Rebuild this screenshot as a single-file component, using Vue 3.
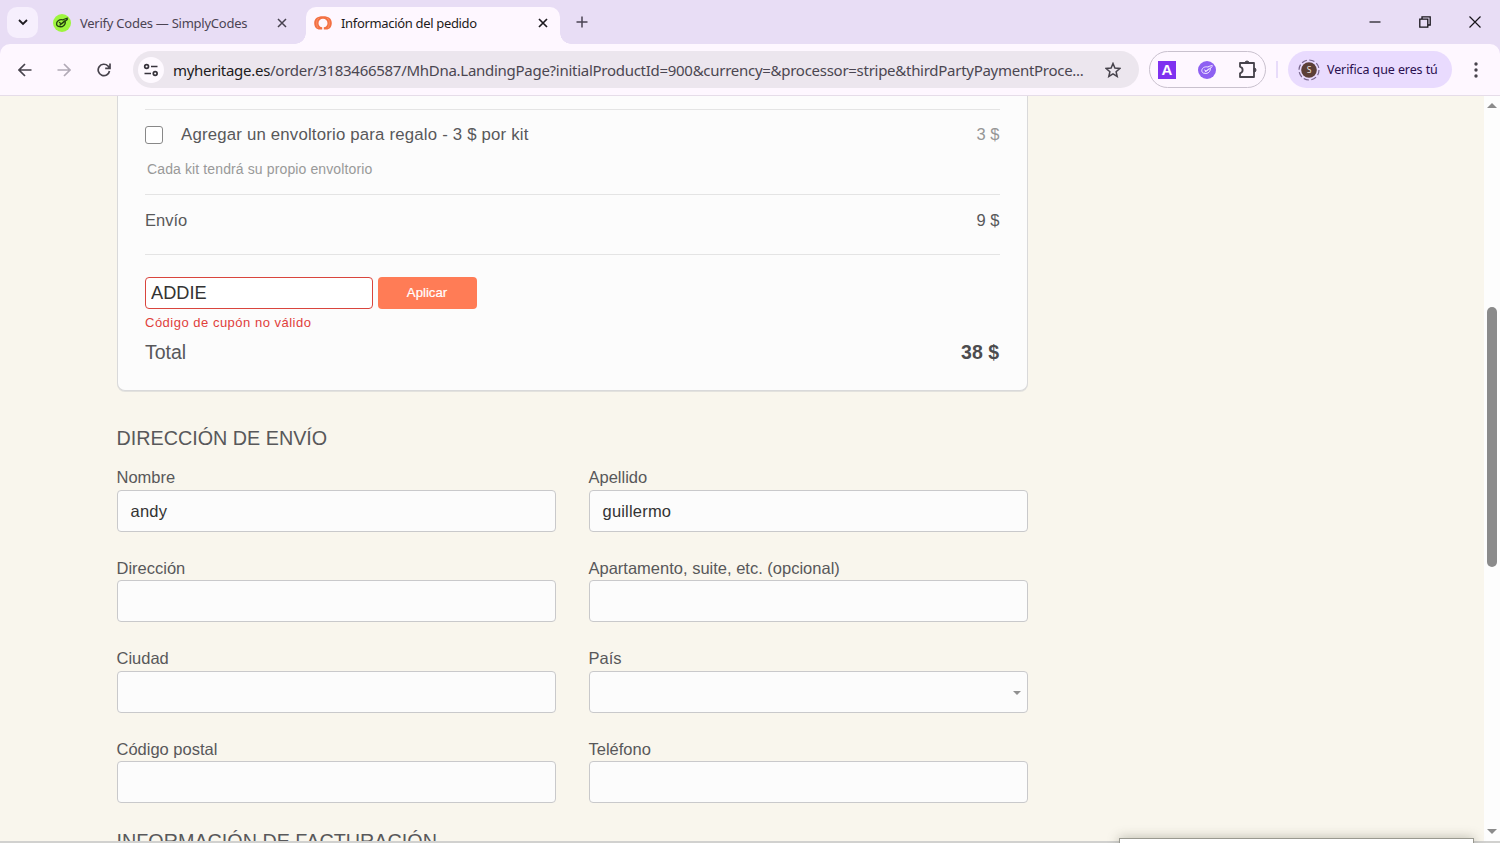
<template>
  <div class="browser">
    <header class="tabs">
      <button class="tab-search" aria-label="tabs">
        <svg width="12" height="12" viewBox="0 0 12 12"><path d="M2 4l4 4 4-4" fill="none" stroke="#1d1b20" stroke-width="1.8" /></svg>
      </button>
      <div class="tab">
        <svg class="favicon" width="18" height="18" viewBox="0 0 18 18">
          <circle cx="9" cy="9" r="9" fill="#9df53e" />
          <g fill="none" stroke="#24420f" stroke-width="1.3" stroke-linecap="round">
            <path d="M10 5.8C6 4.8 3.300 7.600 3.600 10.200c.4 3 5 3.300 7.300 1.200 1.300-1.200 1.600-3 1.100-4.200" />
            <path d="M6.500 8.500l2 1.500L14.300 5.500M7 11l4.500-4M10.500 5.500l4-1.300" />
          </g>
        </svg>
        <span class="tab-title first">Verify Codes — SimplyCodes</span>
        <svg class="close" width="10" height="10" viewBox="0 0 10 10"><path d="M1 1l8 8M9 1L1 9" stroke="#47414f" stroke-width="1.5" /></svg>
      </div>
      <div class="tab active">
        <svg class="favicon" width="18" height="18" viewBox="0 0 18 18">
          <path d="M8.200 15.500H6C2.200 15.500.2 12.800.2 9 .2 5 3 2.300 9 2.300S17.800 5 17.800 9c0 3.800-2 6.500-5.800 6.500H9.800v-2.200c2.200-.3 3.700-1.900 3.700-4.100 0-2.600-2-4.400-4.500-4.400S4.500 6.600 4.500 9.200c0 2.200 1.500 3.800 3.700 4.100z" fill="#f37043" />
          <path d="M4 14C1.700 9.500 2.500 5.500 5 4M14 14c2.300-4.500 1.500-8.500-1-10" fill="none" stroke="#fba27e" stroke-width=".6" />
        </svg>
        <span class="tab-title second">Información del pedido</span>
        <svg class="close" width="10" height="10" viewBox="0 0 10 10"><path d="M1 1l8 8M9 1L1 9" stroke="#1d1b20" stroke-width="1.7" /></svg>
      </div>
      <svg class="new-tab" width="12" height="12" viewBox="0 0 12 12"><path d="M6 .5v11M.5 6h11" stroke="#4a4353" stroke-width="1.5" /></svg>
      <div class="win-controls">
        <svg width="12" height="12" viewBox="0 0 12 12"><path d="M.5 6h11" stroke="#17151a" stroke-width="1.200" /></svg>
        <svg width="12" height="12" viewBox="0 0 12 12"><path d="M.8 3.200h8v8h-8zM3 3V.8h8.200V9H9" fill="none" stroke="#17151a" stroke-width="1.300" /></svg>
        <svg width="12" height="12" viewBox="0 0 12 12"><path d="M.5.5l11 11M11.500.5L.5 11.500" stroke="#17151a" stroke-width="1.200" /></svg>
      </div>
    </header>

    <nav class="toolbar">
      <svg class="nav-icon" width="14" height="14" viewBox="0 0 14 14"><path d="M13.500 7H1.500M7 1L1 7l6 6" fill="none" stroke="#47434c" stroke-width="1.700" /></svg>
      <svg class="nav-icon" width="14" height="14" viewBox="0 0 14 14"><path d="M.5 7h12M7 1l6 6-6 6" fill="none" stroke="#b1aab6" stroke-width="1.700" /></svg>
      <svg class="nav-icon reload" width="14" height="14" viewBox="0 0 14 14"><path d="M12.500 8A5.700 5.700 0 1 1 11 3l1.700 1.900M13 .5v4.800H8.200" fill="none" stroke="#47434c" stroke-width="1.700" /></svg>
      <div class="omnibox">
        <span class="site-info">
          <svg width="16" height="14" viewBox="0 0 16 14" fill="none" stroke="#37333c" stroke-width="1.700">
            <circle cx="3.600" cy="3.500" r="1.900" /><path d="M8 3.500h6.500M1.500 10.500H8" /><circle cx="12.200" cy="10.500" r="1.900" />
          </svg>
        </span>
        <span class="url"><b>myheritage.es</b>/order/3183466587/MhDna.LandingPage?initialProductId=900&amp;currency=&amp;processor=stripe&amp;thirdPartyPaymentProce...</span>
        <svg class="star" width="16" height="16" viewBox="0 0 16 16"><path d="M8 1.500l1.900 4.600 4.900.4-3.700 3.200 1.100 4.800L8 11.900l-4.200 2.600 1.100-4.800L1.200 6.500l4.900-.4z" fill="none" stroke="#47434c" stroke-width="1.500" /></svg>
      </div>
      <div class="extensions">
        <span class="ext-a">A</span>
        <svg width="18" height="18" viewBox="0 0 18 18">
          <circle cx="9" cy="9" r="9" fill="#8e60f2" />
          <g fill="none" stroke="#eee6ff" stroke-width="1" stroke-linecap="round">
            <path d="M10 6C6 5 3.500 7.600 3.800 10c.4 3 5 3.200 7.200 1.200 1.200-1.200 1.600-2.800 1.200-4" />
            <path d="M6.500 9l2 1.200 5.700-4.500M7 11l3.500-3M10.500 5.500l3.700-1" />
          </g>
        </svg>
        <svg width="19" height="19" viewBox="0 0 19 19">
          <path d="M2 3h14v14H2v-3.700c3.500-1.200 3.500-5.400 0-6.600z" fill="none" stroke="#47434c" stroke-width="1.800" stroke-linejoin="round" />
          <path d="M7 3a2 2 0 0 1 4 0zM16 8a2 2 0 0 1 0 4z" fill="#47434c" stroke="#47434c" />
        </svg>
      </div>
      <span class="divider"></span>
      <div class="profile">
        <svg width="22" height="22" viewBox="0 0 22 22">
          <circle cx="11" cy="11" r="10" fill="none" stroke="#76658c" stroke-width="1.200" stroke-dasharray="5.400 2.450" />
          <circle cx="11" cy="11" r="7.800" fill="#5c4037" />
          <text x="11" y="14" text-anchor="middle" font-size="8.500" fill="#eee4df">S</text>
        </svg>
        <span>Verifica que eres tú</span>
      </div>
      <svg class="menu" width="4" height="16" viewBox="0 0 4 16" fill="#47434c"><circle cx="2" cy="2" r="1.700" /><circle cx="2" cy="8" r="1.700" /><circle cx="2" cy="14" r="1.700" /></svg>
    </nav>

    <div class="viewport">
      <main class="page">
        <section class="summary">
          <div class="gift">
            <div class="line">
              <label class="gift-label"><span class="checkbox"></span><span class="gift-text">Agregar un envoltorio para regalo - 3 $ por kit</span></label>
              <span class="price muted">3 $</span>
            </div>
            <p class="note">Cada kit tendrá su propio envoltorio</p>
          </div>
          <div class="line shipping"><span>Envío</span><span class="price">9 $</span></div>
          <div class="coupon">
            <input v-model="coupon" class="coupon-input" />
            <button class="apply">Aplicar</button>
          </div>
          <p class="error">Código de cupón no válido</p>
          <div class="line total"><span>Total</span><strong>38 $</strong></div>
        </section>

        <h2 class="heading">DIRECCIÓN DE ENVÍO</h2>
        <form class="fields">
          <div v-for="field in fields" :key="field.label" class="field">
            <label>{{ field.label }}</label>
            <div class="control">
              <span>{{ field.value }}</span>
              <i v-if="field.select" class="caret"></i>
            </div>
          </div>
        </form>
        <h2 class="heading billing">INFORMACIÓN DE FACTURACIÓN</h2>
      </main>
      <aside class="scrollbar">
        <i class="arrow up"></i>
        <span class="thumb"></span>
        <i class="arrow down"></i>
      </aside>
      <div class="bottom-edge"></div>
      <div class="popup"></div>
    </div>
  </div>
</template>

<script setup>
import { ref } from 'vue'

const coupon = ref('ADDIE')

const fields = ref([
  { label: 'Nombre', value: 'andy' },
  { label: 'Apellido', value: 'guillermo' },
  { label: 'Dirección', value: '' },
  { label: 'Apartamento, suite, etc. (opcional)', value: '' },
  { label: 'Ciudad', value: '' },
  { label: 'País', value: '', select: true },
  { label: 'Código postal', value: '' },
  { label: 'Teléfono', value: '' }
])
</script>

<style>
body {
  margin: 0;
  overflow: hidden;
}
</style>

<style scoped>
* {
  box-sizing: border-box;
}

.browser {
  display: flex;
  flex-direction: column;
  width: 1500px;
  height: 843px;
  overflow: hidden;
  font-family: "Noto Sans", "Open Sans", sans-serif;
  background: #e8ddf5;
}

svg {
  display: block;
  flex: none;
}

.tabs {
  display: flex;
  align-items: center;
  height: 44px;
  flex: none;
}

.tab-search {
  display: flex;
  align-items: center;
  justify-content: center;
  width: 31px;
  height: 31px;
  margin-left: 7px;
  padding: 0;
  border: 0;
  border-radius: 10px;
  background: #f6effd;
}

.tab {
  display: flex;
  align-items: center;
  width: 268px;
  height: 46px;
  padding: 2px 19px 0 15px;
}

.tab.active {
  position: relative;
  align-self: flex-end;
  width: 254px;
  height: 37px;
  padding: 0 12px 5px 8px;
  border-radius: 10px 10px 0 0;
  background: #fef7ff;
}

.tab.active::before,
.tab.active::after {
  content: "";
  position: absolute;
  bottom: 0;
  width: 11px;
  height: 11px;
}

.tab.active::before {
  left: -11px;
  background: radial-gradient(circle at 0 0, transparent 10.500px, #fef7ff 11px);
}

.tab.active::after {
  right: -11px;
  background: radial-gradient(circle at 100% 0, transparent 10.500px, #fef7ff 11px);
}

.tab-title {
  margin-left: 9px;
  font-size: 13px;
  line-height: 18px;
  white-space: nowrap;
}

.first {
  color: #4b4453;
  letter-spacing: -0.250px;
}

.second {
  color: #1d1b20;
  letter-spacing: -0.330px;
}

.close {
  margin-left: auto;
}

.new-tab {
  margin-left: 16px;
}

.win-controls {
  display: flex;
  gap: 38px;
  margin-left: auto;
  margin-right: 19px;
}

.toolbar {
  display: flex;
  align-items: center;
  height: 52px;
  flex: none;
  padding-left: 18px;
  border-bottom: 1px solid #e6dde9;
  border-radius: 10px 10px 0 0;
  background: #fef7ff;
}

.nav-icon {
  margin-right: 25px;
}

.nav-icon.reload {
  margin-left: 1px;
  margin-right: 24px;
}

.omnibox {
  display: flex;
  align-items: center;
  width: 1006px;
  height: 37px;
  margin-left: -2px;
  padding: 0 18px 0 5px;
  border-radius: 19px;
  background: #ece6ee;
}

.site-info {
  display: flex;
  align-items: center;
  justify-content: center;
  width: 26px;
  height: 26px;
  border-radius: 50%;
  background: #fef9ff;
}

.url {
  margin-left: 9px;
  font-size: 15px;
  line-height: 20px;
  letter-spacing: -0.277px;
  white-space: nowrap;
  color: #4b4651;
}

.url b {
  font-weight: 400;
  color: #1d1b20;
}

.star {
  margin-left: auto;
}

.extensions {
  display: flex;
  align-items: center;
  justify-content: space-between;
  width: 117px;
  height: 37px;
  margin-left: 10px;
  padding: 0 8px;
  border: 1px solid #c9c1ce;
  border-radius: 19px;
}

.ext-a {
  width: 18px;
  height: 18px;
  font: bold 15px/18px "Liberation Sans", sans-serif;
  text-align: center;
  color: #fff;
  background: #7f31f0;
}

.divider {
  width: 2px;
  height: 17px;
  margin: 0 10px;
  background: #e8dcfa;
}

.profile {
  display: flex;
  align-items: center;
  width: 164px;
  height: 37px;
  padding-left: 10px;
  border-radius: 19px;
  background: #e9dbfe;
  font-size: 12.500px;
  letter-spacing: -0.100px;
  white-space: nowrap;
  color: #29104f;
}

.profile span {
  margin-left: 7px;
}

.menu {
  margin-left: 22px;
}

.viewport {
  position: relative;
  display: flex;
  height: 747px;
  overflow: hidden;
  font-family: "Liberation Sans", Arial, sans-serif;
  color: #58585a;
}

.page {
  flex: 1;
  padding-left: 117px;
  background: #f9f6ed;
}

.summary {
  width: 911px;
  height: 295px;
  padding: 13px 27px 0;
  border: 1px solid #d9d9da;
  border-top: 0;
  border-radius: 0 0 8px 8px;
  background: #fcfcfc;
  box-shadow: 0 1px 0 #e3e2de;
}

.line {
  display: flex;
  align-items: center;
  justify-content: space-between;
}

.gift {
  height: 85px;
  padding-top: 14px;
  border-top: 1px solid #e4e4e4;
  font-size: 16.500px;
}

.gift .line {
  height: 21px;
}

.gift-label {
  display: flex;
  align-items: center;
}

.checkbox {
  width: 18px;
  height: 18px;
  border: 1px solid #888;
  border-radius: 3px;
  background: #fff;
}

.gift-text {
  margin-left: 18px;
  font-size: 16.800px;
  letter-spacing: 0.190px;
}

.price {
  margin-right: 0.500px;
}

.muted {
  color: #969696;
}

.note {
  margin: 15px 0 0 2px;
  font-size: 14px;
  line-height: 18px;
  letter-spacing: 0.120px;
  color: #999;
}

.shipping {
  height: 61px;
  padding-bottom: 9px;
  border-top: 1px solid #e4e4e4;
  border-bottom: 1px solid #e4e4e4;
  font-size: 16.500px;
}

.coupon {
  display: flex;
  gap: 5px;
  margin-top: 22px;
}

.coupon-input {
  width: 228px;
  height: 32px;
  padding: 0 5px;
  border: 1px solid #d9453d;
  border-radius: 4px;
  outline: 0;
  font: 18.200px "Liberation Sans", Arial, sans-serif;
  color: #333;
  background: #fff;
}

.apply {
  width: 99px;
  height: 32px;
  padding: 0 1px 2px 0;
  border: 0;
  border-radius: 4px;
  font: 13.200px "Liberation Sans", Arial, sans-serif;
  color: #fff;
  -webkit-text-stroke: 0.200px #fff;
  background: #ff7c56;
}

.error {
  margin: 5px 0 0;
  font-size: 13px;
  line-height: 18px;
  letter-spacing: 0.500px;
  color: #e0403b;
}

.total {
  height: 24px;
  margin-top: 8px;
  font-size: 19.500px;
}

.total strong {
  margin-right: 1px;
  color: #4c4c4e;
}

.heading {
  margin: 35px 0 0 -0.500px;
  font-size: 19.750px;
  font-weight: 400;
  line-height: 24px;
}

.fields {
  display: grid;
  grid-template-columns: 439px 439px;
  column-gap: 33px;
  grid-auto-rows: 90.400px;
  margin-top: 17px;
}

.field label {
  display: block;
  height: 23px;
  margin-left: -0.500px;
  padding-top: 0.400px;
  font-size: 16.500px;
  line-height: 20px;
}

.control {
  display: flex;
  align-items: center;
  justify-content: space-between;
  height: 42px;
  padding: 0 6px 0 12.500px;
  border: 1px solid #c9c9cb;
  border-radius: 4px;
  font-size: 16.500px;
  letter-spacing: 0.200px;
  color: #333;
  background: #fcfcfc;
}

.caret {
  margin-top: 3px;
  border: 4px solid transparent;
  border-top: 4px solid #909090;
  border-bottom: 0;
}

.billing {
  margin-top: 0;
}

.scrollbar {
  display: flex;
  flex-direction: column;
  align-items: center;
  width: 16px;
  padding: 7px 0 9px;
  background: #fdfdfd;
}

.arrow {
  border: 5px solid transparent;
}

.up {
  border-top: 0;
  border-bottom: 5px solid #8b8b8b;
}

.down {
  margin-top: auto;
  border-top: 5px solid #8b8b8b;
  border-bottom: 0;
}

.thumb {
  width: 10px;
  height: 260px;
  margin-top: 199px;
  border-radius: 5px;
  background: #8b8b8b;
}

.bottom-edge {
  position: absolute;
  left: 0;
  right: 0;
  bottom: 0;
  height: 2px;
  background: #d1d1cf;
}

.popup {
  position: absolute;
  left: 1119px;
  bottom: -6px;
  width: 355px;
  height: 11px;
  border: 1px solid #999990;
  background: #fff;
  box-shadow: 0 0 12px rgba(60, 60, 40, 0.350);
}
</style>
